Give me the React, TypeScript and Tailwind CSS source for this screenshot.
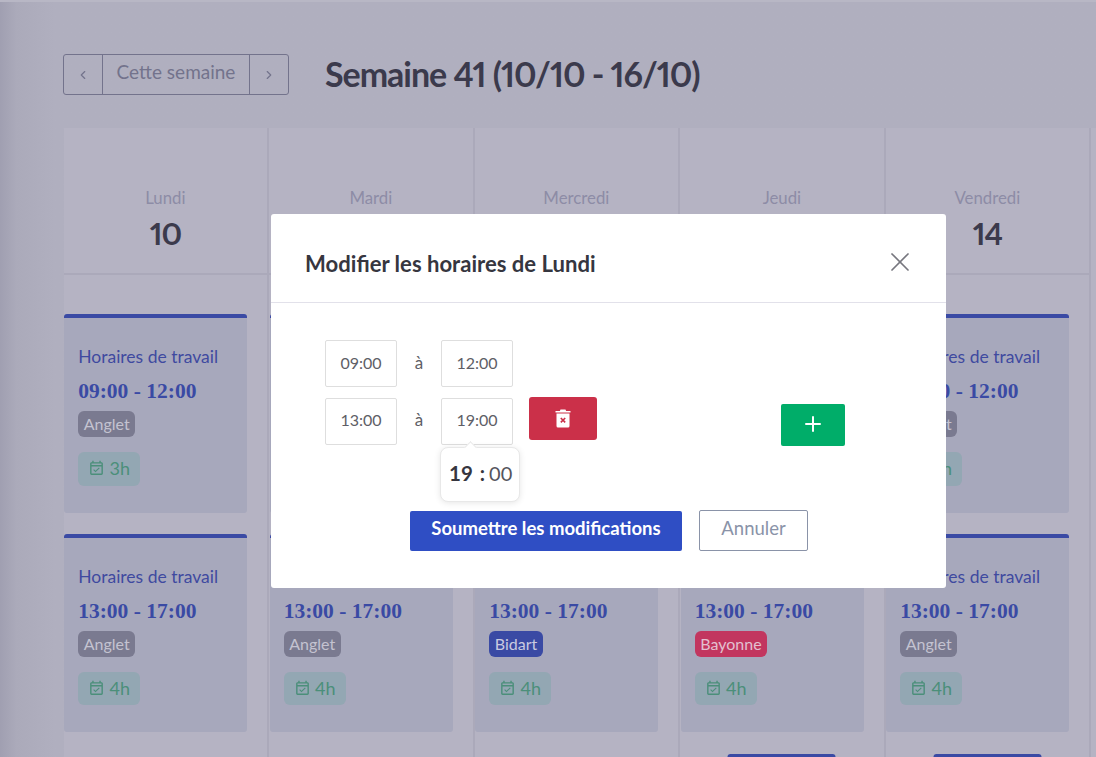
import { ChevronLeft, ChevronRight, Plus, X } from 'lucide-react'
import { MdOutlineEventAvailable } from 'react-icons/md'

const days = [
  { name: 'Lundi', date: '10', places: ['Anglet', 'Anglet'], more: false },
  { name: 'Mardi', date: '11', places: ['Anglet', 'Anglet'], more: false },
  { name: 'Mercredi', date: '12', places: ['Anglet', 'Bidart'], more: false },
  { name: 'Jeudi', date: '13', places: ['Anglet', 'Bayonne'], more: true },
  { name: 'Vendredi', date: '14', places: ['Anglet', 'Anglet'], more: true },
]

const badgeColors: Record<string, string> = {
  Anglet: 'bg-[#7a7a90] text-[#c4c3d0]',
  Bidart: 'bg-[#3a4aa4] text-[#c9cbe0]',
  Bayonne: 'bg-[#c2365f] text-[#e3c0d0]',
}

function ShiftCard({ time, place, hours }: { time: string; place: string; hours: string }) {
  return (
    <div className="h-[198.6px] rounded-[3px] border-t-4 border-[#3a4aa4] bg-[#a7a8bc] pl-[14px] pt-[29px]">
      <div className="text-[17.5px] leading-[20px] text-[#3f4aa0]">Horaires de travail</div>
      <div className="mt-[10px] font-['Liberation_Serif',serif] text-[21.5px] font-bold leading-[28px] text-[#3a4aa4]">
        {time}
      </div>
      <span className={`mt-[6px] block w-fit rounded-[6px] px-[5.5px] text-[16px] leading-[26px] ${badgeColors[place]}`}>
        {place}
      </span>
      <div className="mt-[15px] flex h-[33.5px] w-[62px] items-center justify-center gap-[4px] rounded-[6px] bg-[#93a7b3] text-[18px] text-[#4b8f7a]">
        <MdOutlineEventAvailable size={17} />
        {hours}
      </div>
    </div>
  )
}

function DayColumn({ day }: { day: (typeof days)[number] }) {
  return (
    <div className="w-[205.5px] shrink-0 border-r-2 border-[#aba9ba]">
      <div className="flex h-[147px] flex-col items-center border-b-2 border-[#aba9ba] pt-[60px]">
        <div className="text-[16.8px] leading-[20px] text-[#8d8ca6]">{day.name}</div>
        <div className="mt-[6px] text-[31px] font-bold leading-[38px] tracking-[-1px] text-[#3b3a4c] proportional-nums">
          {day.date}
        </div>
      </div>
      <div className="flex flex-col gap-[21px] pl-[0.6px] pr-[20px] pt-[39px]">
        <ShiftCard time="09:00 - 12:00" place={day.places[0]} hours="3h" />
        <ShiftCard time="13:00 - 17:00" place={day.places[1]} hours="4h" />
        {day.more && <div className="mx-auto mt-[1px] h-[40px] w-[108px] shrink-0 translate-x-[9.5px] rounded-[3px] bg-[#3a4aa4]" />}
      </div>
    </div>
  )
}

function TimeInput({ value }: { value: string }) {
  return (
    <div className="flex h-[47px] w-[72px] items-center justify-center rounded-[2px] border border-[#dedede] pb-[2px] text-[16px] text-[#5e5e66]">
      {value}
    </div>
  )
}

export default function App() {
  return (
    <div className="relative h-[757px] w-[1096px] overflow-hidden border-t-2 border-[#b8b7c5] bg-gradient-to-r from-[#a09fb1] via-[#abaaba] via-[1.5%] to-[#b0afbf] to-[5%] font-['Lato',sans-serif]">
      <div className="pl-[64px] pt-[52px]">
        {/* Toolbar */}
        <div className="flex items-center">
          <div className="-ml-px flex h-[41px] items-stretch rounded-[3px] border border-[#73738c] text-[#73738c]">
            <button className="flex w-[39px] items-center justify-center border-r border-[#73738c]">
              <ChevronLeft size={14} />
            </button>
            <div className="flex w-[146px] items-center justify-center pb-[4px] text-[19px]">Cette semaine</div>
            <button className="flex w-[39px] items-center justify-center border-l border-[#73738c]">
              <ChevronRight size={14} />
            </button>
          </div>
          <h1 className="ml-[36px] pb-[2px] text-[34px] font-bold leading-[38px] tracking-[-1.04px] text-[#3b3a4c] proportional-nums">
            Semaine 41 (10/10 - 16/10)
          </h1>
        </div>

        {/* Calendar */}
        <div className="mt-[33px] -ml-[0.4px] flex h-[640px] bg-[#b5b3c3]">
          {days.map((day) => (
            <DayColumn key={day.name} day={day} />
          ))}
        </div>
      </div>

      {/* Modal */}
      <div className="absolute left-[271px] top-[212px] h-[374px] w-[675px] rounded-[3px] bg-white">
        <div className="flex h-[89px] items-center justify-between border-b border-[#e2e1ea] pl-[34px] pr-[30px]">
          <h2 className="pt-[12px] text-[22.1px] font-bold text-[#36363f]">Modifier les horaires de Lundi</h2>
          <div className="pt-[8px]">
            <X size={32} strokeWidth={1.3} className="text-[#77777f]" />
          </div>
        </div>
        <div className="relative pl-[54px] pt-[37px]">
          <div className="flex items-center text-[#5e5e66]">
            <TimeInput value="09:00" />
            <span className="w-[44px] pb-[2px] text-center text-[17px]">à</span>
            <TimeInput value="12:00" />
          </div>
          <div className="mt-[10px] flex items-center text-[#5e5e66]">
            <TimeInput value="13:00" />
            <span className="w-[44px] pb-[2px] text-center text-[17px]">à</span>
            <TimeInput value="19:00" />
            <button className="ml-[16px] mb-[5px] flex h-[43px] w-[68px] items-center justify-center rounded-[3px] bg-[#cb3049]">
              <svg width="16" height="19" viewBox="0 0 16 19">
                <path d="M5.5 0.5h5l.6 1.4h4.4v1.7H.5V1.9h4.4z" fill="#fff" />
                <path d="M1.5 4.6h13v12.4a1.5 1.5 0 0 1-1.5 1.5H3a1.5 1.5 0 0 1-1.5-1.5z" fill="#fff" />
                <path d="M5.8 9l4.4 4.4M10.2 9l-4.4 4.4" stroke="#cb3049" strokeWidth="1.6" />
              </svg>
            </button>
          </div>

          {/* Add button */}
          <button className="absolute left-[510px] top-[101px] flex h-[42px] w-[64px] items-center justify-center rounded-[2px] bg-[#00ad69] pb-[2px] text-white">
            <Plus size={24} strokeWidth={2} />
          </button>

          {/* Time picker popover */}
          <div className="absolute left-[169px] top-[144px] flex h-[55px] w-[80px] items-center rounded-[8px] border border-[#e8e8e8] bg-white pb-[2px] pl-[8px] text-[20.5px] shadow-[0_1px_6px_rgba(0,0,0,0.1)]">
            <span className="font-bold text-[#36363f]">19</span>
            <span className="ml-[7px] font-bold text-[#36363f]">:</span>
            <span className="mb-px ml-[4px] text-[20px] text-[#55555d]">00</span>
            <div className="absolute -top-[5px] left-[25px] size-[9px] rotate-45 border-l border-t border-[#e8e8e8] bg-white" />
          </div>
        </div>

        <div className="absolute left-[139px] top-[296px] flex items-center gap-[17px]">
          <button className="flex h-[40px] w-[272px] items-center justify-center rounded-[2px] bg-[#2f4ec4] pb-[4px] text-[18.5px] font-bold text-white">
            Soumettre les modifications
          </button>
          <button className="flex h-[41px] w-[109px] items-center justify-center rounded-[2px] border border-[#8a93a8] pb-[4px] text-[18.5px] text-[#8a93a8]">
            Annuler
          </button>
        </div>
      </div>
    </div>
  )
}
